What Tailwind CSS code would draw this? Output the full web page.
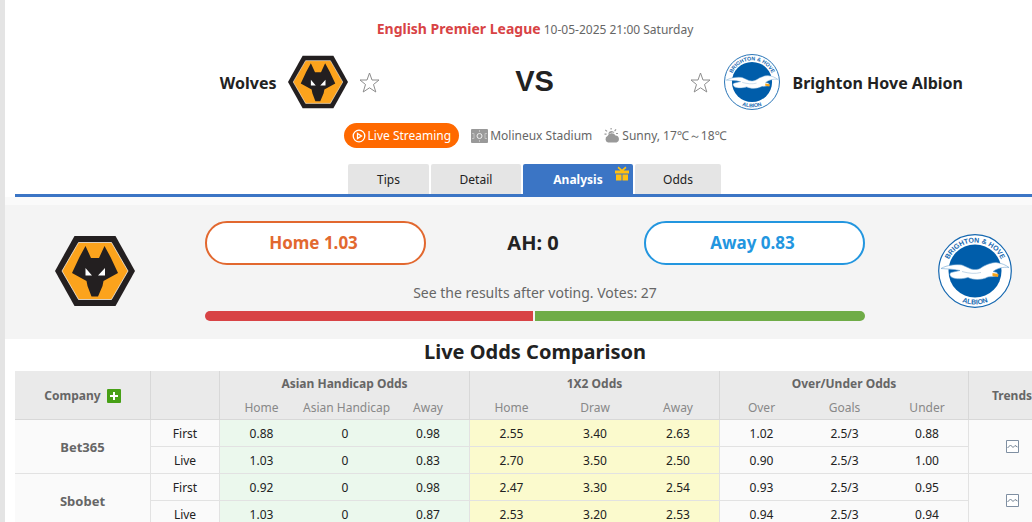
<!DOCTYPE html>
<html lang="en">
<head>
  <meta charset="UTF-8" />
  <meta name="viewport" content="width=device-width, initial-scale=1.0" />
  <title>Wolves VS Brighton Hove Albion</title>
  <script src="https://cdn.jsdelivr.net/npm/@tailwindcss/browser@4"></script>
</head>
<body class="min-h-screen overflow-hidden bg-white border-l-5 border-[#e4e4e4] pl-[10px] text-xs text-[#222] font-[Tahoma,'Noto_Sans','DejaVu_Sans',sans-serif]">

  <!-- Logos and icons used more than once -->
  <svg class="hidden">
    <symbol id="wolves" viewBox="0 0 80 70">
      <path d="M19.500 0H60.500L80 35L60.500 70H19.500L0 35Z" fill="#231f20"/>
      <path d="M23.500 6.500H56.500L73 35L56.500 63.500H23.500L7 35Z" fill="#fca31c" stroke="#fff" stroke-width=".7"/>
      <path d="M30.500 10L36 22H44L49.500 10L55.500 21L63 37L48.500 45L47.500 50L43 60.500H36.500L32.500 50L31.500 45L17 37L24.500 21Z" fill="#231f20"/>
      <path d="M30.500 32L37 39.500H30.500ZM50 32L50 39.500H43Z" fill="#fff"/>
    </symbol>
    <symbol id="brighton" viewBox="0 0 74 74">
      <circle cx="37" cy="37" r="36.300" fill="#fff" stroke="#1467b0" stroke-width="1.200"/>
      <circle cx="37" cy="37" r="26.500" fill="#005daa"/>
      <path id="arc-top" d="M8.500 37A28.500 28.500 0 0 1 65.500 37" fill="none"/>
      <path id="arc-bottom" d="M3.500 37A33.500 33.500 0 0 0 70.500 37" fill="none"/>
      <text font-family="Liberation Sans" font-weight="bold" font-size="7" fill="#1467b0" text-anchor="middle"><textPath href="#arc-top" startOffset="50%">BRIGHTON &amp; HOVE</textPath></text>
      <text font-family="Liberation Sans" font-weight="bold" font-size="7" fill="#1467b0" text-anchor="middle"><textPath href="#arc-bottom" startOffset="50%">ALBION</textPath></text>
      <path d="M3 34.500C9 31 18 30 24 31L33 35C37 36 40 35.500 42 34.500C47 31 53 28.500 58 28.500C63 29 68 31 71 33.500C65 32.500 59 34.500 55 37.500L59 38.500L60 41.500C56 43 53 42.500 50 43C43 46.500 35 46 30 43.500C25 45 18 45.500 14 43.500C12 42 11 40 13 38.500L22 36.500C15 35 9 35 3 34.500Z" fill="#fff" stroke="#6da3d0" stroke-width=".6"/>
      <path d="M24 37.500C31 39.500 37 40 43 38.500" fill="none" stroke="#b5cde2" stroke-width=".8"/>
      <path d="M54.500 39L60.500 40L60 43L54.500 42Z" fill="#f6a41c"/>
    </symbol>
    <symbol id="star" viewBox="0 0 21 21">
      <path d="M10.500 1L13 8H20L14.500 12.500L16.800 20L10.500 15.800L4.200 20L6.500 12.500L1 8H8Z" fill="#fff" stroke="#8c8c8c" stroke-width="1"/>
    </symbol>
    <symbol id="trend" viewBox="0 0 13 13">
      <path d="M.5 .5H12.500V12.500H.5Z" fill="#fff" stroke="#7f8fa2"/>
      <path d="M1.500 8L4.500 5L7 7.500L9 5.500L11.500 7" fill="none" stroke="#6f7f90"/>
    </symbol>
  </svg>

  <div class="w-full min-w-[1040px]">

    <!-- Match info -->
    <header class="pt-5">
      <p class="text-center leading-[18px] text-[#666]">
        <a href="#" class="text-sm leading-[18px] font-bold text-[#d84345]">English Premier League</a>
        10-05-2025 21:00 Saturday
      </p>

      <div class="grid grid-cols-[1fr_310px_1fr] items-center pt-[15px] pr-px">
        <div class="flex items-center justify-end gap-[11px]">
          <a href="#" class="pt-[2px] text-base leading-6 font-bold">Wolves</a>
          <svg class="w-[60px] h-[56px]"><use href="#wolves"/></svg>
          <button aria-label="Follow Wolves"><svg class="size-[21px]"><use href="#star"/></svg></button>
        </div>
        <span class="pb-[2px] text-center text-[29px] leading-8 font-bold font-[Liberation_Sans,sans-serif]">VS</span>
        <div class="flex items-center gap-[13px]">
          <button aria-label="Follow Brighton Hove Albion"><svg class="size-[21px]"><use href="#star"/></svg></button>
          <svg class="size-[56px]"><use href="#brighton"/></svg>
          <a href="#" class="pt-[2px] text-base leading-6 font-bold">Brighton Hove Albion</a>
        </div>
      </div>

      <div class="flex items-center justify-center gap-3 pt-[13px] text-[#666]">
        <button class="flex h-[25px] items-center gap-[2px] rounded-full bg-[#ff6900] px-2 text-white">
          <svg class="size-[14px]" viewBox="0 0 14 14" fill="none" stroke="#fff"><circle cx="7" cy="7" r="5.800" stroke-width="1.300"/><path d="M5.500 4.500L9.500 7L5.500 9.500Z" stroke-width="1.300"/></svg>
          Live Streaming
        </button>
        <span class="flex items-center gap-[2px]">
          <svg class="w-[17px] h-[14px]" viewBox="0 0 17 14"><rect width="17" height="14" rx="1" fill="#999"/><path d="M8.500 1V3M8.500 11V13M1 4.500H3V9.500H1M16 4.500H14V9.500H16" fill="none" stroke="#ccc" stroke-width=".8"/><circle cx="8.500" cy="7" r="2.500" fill="none" stroke="#eee"/></svg>
          Molineux Stadium
        </span>
        <span class="flex items-center gap-[2px]">
          <svg class="w-4 h-[15px]" viewBox="0 0 16 15" fill="#999"><path d="M4 14.500A3.500 3.500 0 0 1 3.500 8A4.500 4.500 0 0 1 11.500 7.500A3.600 3.600 0 0 1 12.500 14.500Z"/><path d="M4.500 5A3.200 3.200 0 0 1 10.500 5A5.500 5.500 0 0 0 4.500 6.500ZM.5 5.500H2.500V6.700H.5ZM1.500 1.500L3.500 3L2.800 3.800L1 2.500ZM6.500 0H7.700V1.500H6.500ZM11.500 1L12.500 1.800L11 3.500L10.200 2.800ZM12 5H14V6H12Z"/></svg>
          Sunny, 17℃～18℃
        </span>
      </div>

      <nav class="mt-4 flex justify-center gap-[2px] border-b-3 border-[#3b75c5] pr-px leading-7 text-center">
        <a href="#" class="w-[81px] rounded-t-xs bg-[#e5e5e5] pt-[2px]">Tips</a>
        <a href="#" class="w-[90px] rounded-t-xs bg-[#e5e5e5] pt-[2px]">Detail</a>
        <a href="#" class="relative w-[110px] rounded-t-xs bg-[#3b75c5] pt-[2px] font-bold text-white">Analysis
          <svg class="absolute right-1 top-[2px] w-[14px] h-[15px]" viewBox="0 0 14 15" fill="#ffc010"><path d="M0 4.500H14V7.500H0ZM1 8.500H6.500V14.500H1ZM7.500 8.500H13V14.500H7.500ZM5.500 4.500L2.500 2L3.500 .5L7 3.500L10.500 .5L11.500 2L8.500 4.500Z"/></svg>
        </a>
        <a href="#" class="w-[86px] rounded-t-xs bg-[#e5e5e5] pt-[2px]">Odds</a>
      </nav>
    </header>

    <!-- Voting -->
    <section class="-ml-[10px] flex items-center justify-between border-t-8 border-[#fafafa] bg-[#f4f4f4] pl-[50px] pr-10 pt-4 pb-[18px]">
      <svg class="w-20 h-[70px]"><use href="#wolves"/></svg>
      <div class="w-[660px]">
        <div class="flex items-center justify-between text-[17px] font-bold">
          <button class="h-11 w-[221px] rounded-full border-2 border-[#e2682f] bg-white pr-1 text-[#e2682f]">Home 1.03</button>
          <span class="pr-1 text-xl leading-7">AH: 0</span>
          <button class="h-11 w-[221px] rounded-full border-2 border-[#2396df] bg-white pr-1 text-[#2396df]">Away 0.83</button>
        </div>
        <p class="pt-[18px] pb-2 text-center text-sm text-[#666]">See the results after voting. Votes: 27</p>
        <div class="flex h-[10px] gap-[2px] overflow-hidden rounded-full">
          <div class="bg-[#d84345]" style="width: 49.7%"></div>
          <div class="flex-1 bg-[#6fac47]"></div>
        </div>
      </div>
      <svg class="w-20 h-[74px]"><use href="#brighton"/></svg>
    </section>

    <!-- Odds -->
    <h2 class="h-8 text-center text-xl leading-[26px] font-bold">Live Odds Comparison</h2>
    <table class="w-full table-fixed border-separate border-spacing-0 bg-[#fafafa] text-center leading-6 [&_td]:border-b [&_td]:border-[#e2e2e2] [&_td]:pt-[2px]">
      <colgroup>
        <col class="w-[136px]"><col class="w-[69px]">
        <col class="w-[83px]"><col class="w-[84px]"><col class="w-[83px]">
        <col class="w-[83px]"><col class="w-[84px]"><col class="w-[83px]">
        <col class="w-[83px]"><col class="w-[83px]"><col class="w-[83px]">
        <col>
      </colgroup>
      <thead class="bg-[#eaeaea] leading-[22px] text-[#666] [&_th]:pt-[2px]">
        <tr>
          <th rowspan="2" class="border-r border-b border-[#d8d8d8]">
            <div class="flex items-center justify-center gap-[6px]">Company
              <button aria-label="Add company"><svg class="size-[14px]" viewBox="0 0 14 14"><rect width="14" height="14" rx="1" fill="#47a016"/><path d="M7 3V11M3 7H11" stroke="#fff" stroke-width="2"/></svg></button>
            </div>
          </th>
          <th rowspan="2" class="border-r border-b border-[#d8d8d8]"></th>
          <th colspan="3" class="border-r border-[#d8d8d8]">Asian Handicap Odds</th>
          <th colspan="3" class="border-r border-[#d8d8d8]">1X2 Odds</th>
          <th colspan="3" class="border-r border-[#d8d8d8]">Over/Under Odds</th>
          <th rowspan="2" class="border-b border-[#d8d8d8]">Trends</th>
        </tr>
        <tr class="text-[#888] [&>th]:border-b [&>th]:border-[#d8d8d8] [&>th]:font-normal [&>th]:whitespace-nowrap">
          <th>Home</th><th>Asian Handicap</th><th class="border-r">Away</th>
          <th>Home</th><th>Draw</th><th class="border-r">Away</th>
          <th>Over</th><th>Goals</th><th class="border-r">Under</th>
        </tr>
      </thead>
      <tbody>
        <tr>
          <th rowspan="2" class="border-r border-b border-[#e2e2e2] text-[13px] text-[#666]">Bet365</th>
          <td class="border-r">First</td>
          <td class="bg-[#ebf8ed]">0.88</td><td class="bg-[#ebf8ed]">0</td><td class="border-r bg-[#ebf8ed]">0.98</td>
          <td class="bg-[#fbfacd]">2.55</td><td class="bg-[#fbfacd]">3.40</td><td class="border-r bg-[#fbfacd]">2.63</td>
          <td>1.02</td><td>2.5/3</td><td class="border-r">0.88</td>
          <td rowspan="2" class="pt-0!"><button aria-label="Bet365 trend" class="block mx-auto"><svg class="size-[13px]"><use href="#trend"/></svg></button></td>
        </tr>
        <tr>
          <td class="border-r">Live</td>
          <td class="bg-[#ebf8ed]">1.03</td><td class="bg-[#ebf8ed]">0</td><td class="border-r bg-[#ebf8ed]">0.83</td>
          <td class="bg-[#fbfacd]">2.70</td><td class="bg-[#fbfacd]">3.50</td><td class="border-r bg-[#fbfacd]">2.50</td>
          <td>0.90</td><td>2.5/3</td><td class="border-r">1.00</td>
        </tr>
        <tr>
          <th rowspan="2" class="border-r border-b border-[#e2e2e2] text-[13px] text-[#666]">Sbobet</th>
          <td class="border-r">First</td>
          <td class="bg-[#ebf8ed]">0.92</td><td class="bg-[#ebf8ed]">0</td><td class="border-r bg-[#ebf8ed]">0.98</td>
          <td class="bg-[#fbfacd]">2.47</td><td class="bg-[#fbfacd]">3.30</td><td class="border-r bg-[#fbfacd]">2.54</td>
          <td>0.93</td><td>2.5/3</td><td class="border-r">0.95</td>
          <td rowspan="2" class="pt-0!"><button aria-label="Sbobet trend" class="block mx-auto"><svg class="size-[13px]"><use href="#trend"/></svg></button></td>
        </tr>
        <tr>
          <td class="border-r">Live</td>
          <td class="bg-[#ebf8ed]">1.03</td><td class="bg-[#ebf8ed]">0</td><td class="border-r bg-[#ebf8ed]">0.87</td>
          <td class="bg-[#fbfacd]">2.53</td><td class="bg-[#fbfacd]">3.20</td><td class="border-r bg-[#fbfacd]">2.53</td>
          <td>0.94</td><td>2.5/3</td><td class="border-r">0.94</td>
        </tr>
      </tbody>
    </table>
  </div>

</body>
</html>
